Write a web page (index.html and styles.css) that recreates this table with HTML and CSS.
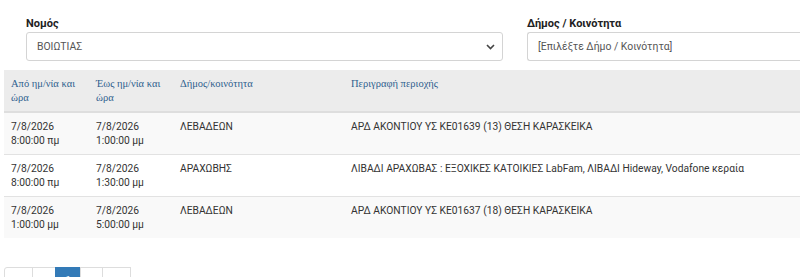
FILE: index.html
```html
<!DOCTYPE html>
<html lang="el">
<head>
<meta charset="utf-8">
<link rel="stylesheet" href="styles.css">
</head>
<body>
<div class="page">
  <div class="filters">
    <div class="field">
      <label class="lbl">Νομός</label>
      <div class="select">
        <span class="val">ΒΟΙΩΤΙΑΣ</span>
        <svg class="chev" width="9" height="6" viewBox="0 0 9 6"><path d="M1 1 L4.5 4.5 L8 1" fill="none" stroke="#444" stroke-width="1.6"/></svg>
      </div>
    </div>
    <div class="field">
      <label class="lbl">Δήμος / Κοινότητα</label>
      <div class="select wide">
        <span class="ph">[Επιλέξτε Δήμο / Κοινότητα]</span>
      </div>
    </div>
  </div>

  <table class="grid">
    <colgroup>
      <col class="c1"><col class="c2"><col class="c3"><col>
    </colgroup>
    <thead>
      <tr>
        <th>Από ημ/νία και ώρα</th>
        <th>Έως ημ/νία και ώρα</th>
        <th>Δήμος/κοινότητα</th>
        <th>Περιγραφή περιοχής</th>
      </tr>
    </thead>
    <tbody>
      <tr class="odd">
        <td>7/8/2026<br>8:00:00 πμ</td>
        <td>7/8/2026<br>1:00:00 μμ</td>
        <td>ΛΕΒΑΔΕΩΝ</td>
        <td>ΑΡΔ ΑΚΟΝΤΙΟΥ ΥΣ ΚΕ01639 (13) ΘΕΣΗ ΚΑΡΑΣΚΕΙΚΑ</td>
      </tr>
      <tr>
        <td>7/8/2026<br>8:00:00 πμ</td>
        <td>7/8/2026<br>1:30:00 μμ</td>
        <td>ΑΡΑΧΩΒΗΣ</td>
        <td>ΛΙΒΑΔΙ ΑΡΑΧΩΒΑΣ : ΕΞΟΧΙΚΕΣ ΚΑΤΟΙΚΙΕΣ LabFam, ΛΙΒΑΔΙ Hideway, Vodafone κεραία</td>
      </tr>
      <tr class="odd">
        <td>7/8/2026<br>1:00:00 μμ</td>
        <td>7/8/2026<br>5:00:00 μμ</td>
        <td>ΛΕΒΑΔΕΩΝ</td>
        <td>ΑΡΔ ΑΚΟΝΤΙΟΥ ΥΣ ΚΕ01637 (18) ΘΕΣΗ ΚΑΡΑΣΚΕΙΚΑ</td>
      </tr>
    </tbody>
  </table>

  <ul class="pager">
    <li class="p w28">«</li>
    <li class="p w23">‹</li>
    <li class="p w25 active">1</li>
    <li class="p w22">›</li>
    <li class="p w28">»</li>
  </ul>
</div>
</body>
</html>
```

FILE: styles.css
```css
html, body {
  margin: 0;
  padding: 0;
  height: 277px;
  overflow: hidden;
  background: #fff;
}
body {
  font-family: Roboto, "Liberation Sans", Arial, sans-serif;
  font-size: 10.25px;
  color: #333;
}
.page {
  width: 860px;
  padding-left: 4px;
}
.filters {
  display: grid;
  grid-template-columns: 477px 320px;
  column-gap: 24px;
  padding: 16px 0 0 22px;
}
.lbl {
  display: block;
  font-weight: 700;
  font-size: 11px;
  line-height: 15px;
  color: #222;
  margin-bottom: 1px;
}
.select {
  box-sizing: border-box;
  height: 29px;
  border: 1px solid #d4d4d4;
  border-radius: 3px;
  display: flex;
  align-items: center;
  justify-content: space-between;
  padding: 0 6px 0 10px;
  color: #555;
  font-size: 10.4px;
}
.select.wide {
  border-right: none;
  border-radius: 3px 0 0 3px;
}
.ph { color: #555; }
.chev { display: block; margin-right: 1px; }

.grid {
  margin-top: 9px;
  width: 856px;
  border-collapse: collapse;
  table-layout: fixed;
}
.c1 { width: 85px; }
.c2 { width: 84px; }
.c3 { width: 171px; }
.grid th {
  background: #ececec;
  font-family: "Liberation Serif", "Times New Roman", serif;
  font-weight: 400;
  font-size: 10.5px;
  color: #2f5f8e;
  text-align: left;
  vertical-align: top;
  line-height: 14px;
  padding: 7px 7px 6px;
  height: 28px;
  border-bottom: 2px solid #dedede;
}
.grid td {
  vertical-align: top;
  line-height: 14px;
  padding: 7px 7px 6px;
  height: 28px;
  border-top: 1px solid #e2e2e2;
}
.grid tr.odd td { background: #f9f9f9; }

.pager {
  list-style: none;
  margin: 29px 0 0;
  padding: 0;
  display: flex;
}
.p {
  box-sizing: border-box;
  height: 30px;
  border: 1px solid #ddd;
  margin-left: -1px;
  text-align: center;
  padding-top: 6px;
  font-size: 11px;
  color: #337ab7;
  background: #fff;
}
.p:first-child { margin-left: 0; border-radius: 3px 0 0 3px; }
.w28 { width: 29px; }
.w23 { width: 24px; }
.w25 { width: 26px; }
.w22 { width: 23px; }
.p.active { background: #337ab7; border-color: #337ab7; color: #fff; }
```
